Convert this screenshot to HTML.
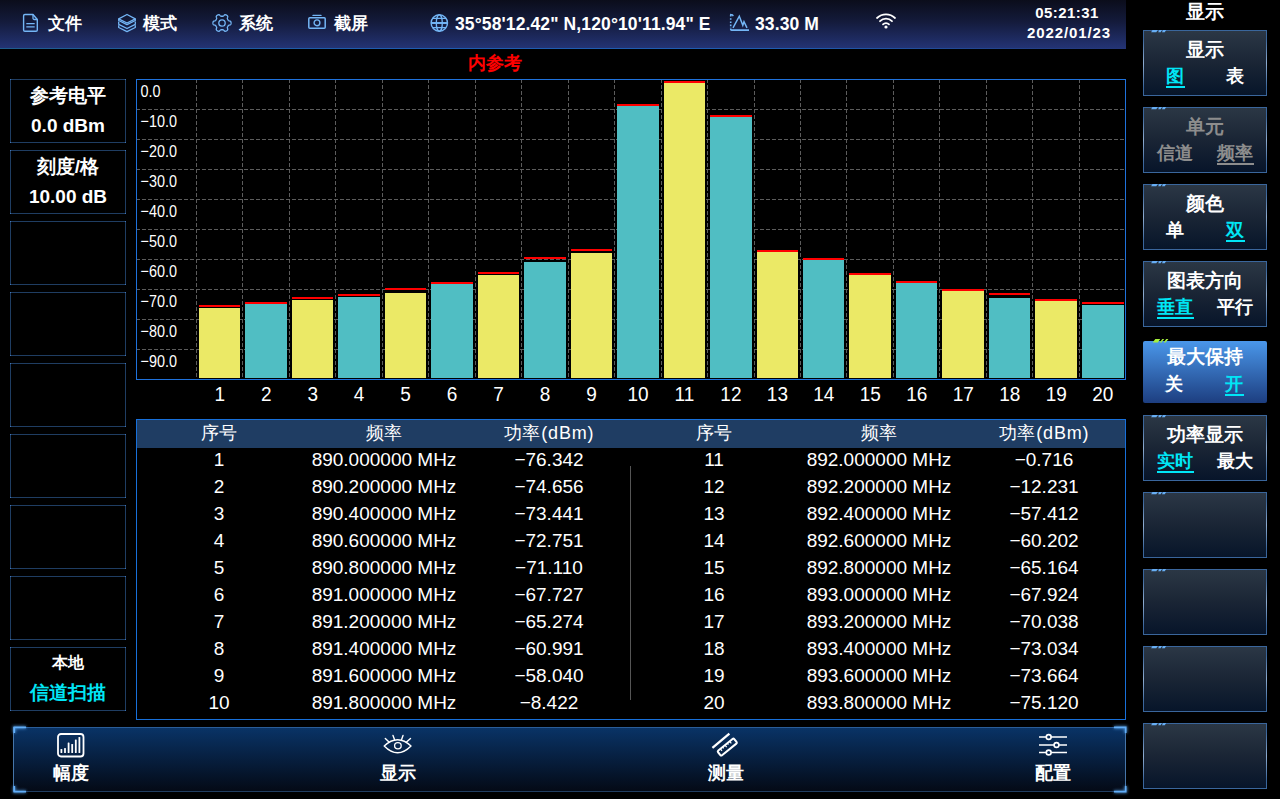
<!DOCTYPE html><html><head><meta charset="utf-8"><style>
*{margin:0;padding:0;box-sizing:border-box}
html,body{width:1280px;height:799px;overflow:hidden;background:#000;font-family:"Liberation Sans",sans-serif;color:#fff}
.a{position:absolute}
.hdr{left:0;top:0;width:1126px;height:49px;background:linear-gradient(#0b0d1b 0%,#141b3c 45%,#243476 100%)}
.hline{left:0;top:48px;width:1126px;height:1px;background:linear-gradient(90deg,#1f5c8c 0%,#1e5cb0 35%,#1e5cb0 70%,rgba(36,52,118,1) 100%)}
.ht{font-size:17.5px;font-weight:bold;line-height:20px;white-space:nowrap;letter-spacing:0.3px}
.lb{left:10px;width:116px;height:64px;border:1px solid #1f3d62}
.lt{width:100%;text-align:center;font-weight:bold;font-size:19px;line-height:20px;position:absolute;left:0}
.rb{left:1143px;width:124px;height:66px;border:1px solid #3a669c;background:linear-gradient(#2b3745,#1a2535 50%,#07152a)}
.rb::before,.rb::after{content:'';position:absolute;top:8px;bottom:8px;width:1px;background:linear-gradient(rgba(120,160,200,0),rgba(170,195,225,.75),rgba(120,160,200,0))}.rb::before{left:-1px}.rb::after{right:-1px}.rb.on::before,.rb.on::after{display:none}
.rb.on{background:linear-gradient(#4a97ea,#1d3e80);border:none;border-radius:2px;margin-top:3px;height:62px}
.rb.on .rt{margin-top:-3px}.rb.on .ro{margin-top:-2px}
.rt{position:absolute;left:0;width:100%;text-align:center;font-size:18.5px;font-weight:bold;line-height:20px}
.ro{position:absolute;font-size:18px;font-weight:bold;line-height:20px;text-align:center;width:40px}
.cy{color:#00e6f6}
.u span{display:inline-block;line-height:20px;position:relative}.u span::after{content:"";position:absolute;left:-0.5px;right:-0.5px;top:20px;height:1.6px;background:currentColor}
.gr{color:#8d8d8d}
.deco{position:absolute;left:8px;top:-1px;width:16px;height:3px}
.tbl{left:136px;top:419px;width:990px;height:301px;border:1px solid #1870da}
.th{position:absolute;left:0;top:0;width:988px;height:28px;background:#1f3d63}
.tc{position:absolute;font-size:19px;line-height:22px;text-align:center;width:200px;white-space:nowrap}
.nav{left:13px;top:727px;width:1113px;height:65px;background:linear-gradient(#093366,#040a16);border:1px solid #2a5d98;border-bottom-color:#213d60;border-left-color:#4676aa;border-right-color:#4676aa}
.nt{position:absolute;font-size:18px;font-weight:bold;line-height:20px;width:80px;text-align:center}
</style></head><body>
<div class="a hdr"></div><div class="a hline"></div>
<svg class="a" style="left:22px;top:13px" width="18" height="21" viewBox="0 0 18 21"><path d="M1.6 2.8a1.3 1.3 0 0 1 1.3-1.3H11L15.3 6.5V17a1.3 1.3 0 0 1-1.3 1.3H2.9A1.3 1.3 0 0 1 1.6 17z" fill="none" stroke="#74b6f6" stroke-width="1.4" stroke-linejoin="round"/><path d="M11 1.5v3.7a1.3 1.3 0 0 0 1.3 1.3h3" fill="none" stroke="#74b6f6" stroke-width="1.3"/><path d="M4.3 10.6h8.4M4.3 13.8h8.4" stroke="#74b6f6" stroke-width="1.3"/></svg>
<div class="a ht" style="left:48px;top:14px;font-size:17px;letter-spacing:0">文件</div>
<svg class="a" style="left:117px;top:13px" width="20" height="20" viewBox="0 0 20 20"><g fill="none" stroke="#74b6f6" stroke-width="1.3" stroke-linejoin="round"><path d="M10 1.5L18.3 5.8 10 10 1.7 5.8z"/><path d="M1.7 5.8V7.5L10 11.7 18.3 7.5V5.8"/><path d="M1.7 8.5V11.3L10 15.5 18.3 11.3V8.5"/><path d="M1.7 12.3V14.5L10 18.6 18.3 14.5V12.3"/></g></svg>
<div class="a ht" style="left:143px;top:14px;font-size:17px;letter-spacing:0">模式</div>
<svg class="a" style="left:212px;top:13px" width="20" height="20" viewBox="0 0 20 20"><path d="M19.05 10.00 L19.04 10.32 L19.01 10.63 L18.96 10.94 L18.87 11.25 L18.71 11.54 L18.41 11.79 L17.92 11.98 L17.34 12.10 L16.85 12.23 L16.54 12.38 L16.34 12.56 L16.20 12.76 L16.08 12.96 L15.96 13.17 L15.85 13.38 L15.73 13.58 L15.61 13.78 L15.49 13.99 L15.39 14.21 L15.33 14.47 L15.35 14.82 L15.49 15.30 L15.67 15.87 L15.75 16.39 L15.68 16.77 L15.52 17.06 L15.30 17.29 L15.05 17.49 L14.79 17.67 L14.53 17.84 L14.25 17.99 L13.96 18.12 L13.67 18.23 L13.36 18.31 L13.02 18.31 L12.66 18.18 L12.25 17.85 L11.85 17.41 L11.50 17.05 L11.21 16.85 L10.95 16.77 L10.71 16.75 L10.47 16.75 L10.24 16.75 L10.00 16.75 L9.76 16.75 L9.53 16.75 L9.29 16.75 L9.05 16.77 L8.79 16.85 L8.50 17.05 L8.15 17.41 L7.75 17.85 L7.34 18.18 L6.98 18.31 L6.64 18.31 L6.33 18.23 L6.04 18.12 L5.75 17.99 L5.48 17.84 L5.21 17.67 L4.95 17.49 L4.70 17.29 L4.48 17.06 L4.32 16.77 L4.25 16.39 L4.33 15.87 L4.51 15.30 L4.65 14.82 L4.67 14.47 L4.61 14.21 L4.51 13.99 L4.39 13.78 L4.27 13.58 L4.15 13.38 L4.04 13.17 L3.92 12.96 L3.80 12.76 L3.66 12.56 L3.46 12.38 L3.15 12.23 L2.66 12.10 L2.08 11.98 L1.59 11.79 L1.29 11.54 L1.13 11.25 L1.04 10.94 L0.99 10.63 L0.96 10.32 L0.95 10.00 L0.96 9.68 L0.99 9.37 L1.04 9.06 L1.13 8.75 L1.29 8.46 L1.59 8.21 L2.08 8.02 L2.66 7.90 L3.15 7.77 L3.46 7.62 L3.66 7.44 L3.80 7.24 L3.92 7.04 L4.04 6.83 L4.15 6.62 L4.27 6.42 L4.39 6.22 L4.51 6.01 L4.61 5.79 L4.67 5.53 L4.65 5.18 L4.51 4.70 L4.33 4.13 L4.25 3.61 L4.32 3.23 L4.48 2.94 L4.70 2.71 L4.95 2.51 L5.21 2.33 L5.47 2.16 L5.75 2.01 L6.04 1.88 L6.33 1.77 L6.64 1.69 L6.98 1.69 L7.34 1.82 L7.75 2.15 L8.15 2.59 L8.50 2.95 L8.79 3.15 L9.05 3.23 L9.29 3.25 L9.53 3.25 L9.76 3.25 L10.00 3.25 L10.24 3.25 L10.47 3.25 L10.71 3.25 L10.95 3.23 L11.21 3.15 L11.50 2.95 L11.85 2.59 L12.25 2.15 L12.66 1.82 L13.02 1.69 L13.36 1.69 L13.67 1.77 L13.96 1.88 L14.25 2.01 L14.53 2.16 L14.79 2.33 L15.05 2.51 L15.30 2.71 L15.52 2.94 L15.68 3.23 L15.75 3.61 L15.67 4.13 L15.49 4.70 L15.35 5.18 L15.33 5.53 L15.39 5.79 L15.49 6.01 L15.61 6.22 L15.73 6.42 L15.85 6.62 L15.96 6.83 L16.08 7.04 L16.20 7.24 L16.34 7.44 L16.54 7.62 L16.85 7.77 L17.34 7.90 L17.92 8.02 L18.41 8.21 L18.71 8.46 L18.87 8.75 L18.96 9.06 L19.01 9.37 L19.04 9.68Z" fill="none" stroke="#74b6f6" stroke-width="1.3" stroke-linejoin="round"/><circle cx="10" cy="10" r="3.2" fill="none" stroke="#74b6f6" stroke-width="1.3"/></svg>
<div class="a ht" style="left:239px;top:14px;font-size:17px;letter-spacing:0">系统</div>
<svg class="a" style="left:307px;top:14px" width="20" height="16" viewBox="0 0 20 16"><path d="M6 1.4h8" stroke="#74b6f6" stroke-width="1.4" stroke-linecap="round"/><rect x="1.8" y="3.7" width="16.4" height="10.5" rx="1" fill="none" stroke="#74b6f6" stroke-width="1.5"/><circle cx="10" cy="8.8" r="2.9" fill="none" stroke="#74b6f6" stroke-width="1.4"/></svg>
<div class="a ht" style="left:334px;top:14px;font-size:17px;letter-spacing:0">截屏</div>
<svg class="a" style="left:429px;top:13px" width="20" height="20" viewBox="0 0 20 20"><circle cx="10.3" cy="10" r="8.2" fill="none" stroke="#74b6f6" stroke-width="1.4"/><ellipse cx="10.3" cy="10" rx="3" ry="8.2" fill="none" stroke="#74b6f6" stroke-width="1.3"/><path d="M3.2 5.3h14.2M2.1 10h16.4M3.2 14.7h14.2" stroke="#74b6f6" stroke-width="1.3"/><path d="M2.1 10h16.4" stroke="#74b6f6" stroke-width="1.8"/></svg>
<div class="a ht" style="left:455px;top:14px;letter-spacing:0.12px">35°58'12.42" N,120°10'11.94" E</div>
<svg class="a" style="left:728px;top:12px" width="22" height="20" viewBox="0 0 22 20"><path d="M2.7 3v13" stroke="#74b6f6" stroke-width="1.6" stroke-dasharray="1.6 1.6"/><path d="M2 2.5l2.5 0.5 0.8 1.2" fill="none" stroke="#74b6f6" stroke-width="1.4"/><path d="M2.7 16.5v0.8a0.8 0.8 0 0 0 0.8 0.8H21" fill="none" stroke="#74b6f6" stroke-width="1.6"/><path d="M5 15.8L11.3 4.2l3.5 9 1.2-3.5 3 6.1" fill="none" stroke="#74b6f6" stroke-width="1.5" stroke-linejoin="miter"/></svg>
<div class="a ht" style="left:755px;top:14px;letter-spacing:0.1px">33.30 M</div>
<svg class="a" style="left:875px;top:11px" width="22" height="18" viewBox="0 0 22 18"><path d="M2 7a13 13 0 0 1 18 0" fill="none" stroke="#fff" stroke-width="1.8" stroke-linecap="round"/><path d="M5 10.2a8.5 8.5 0 0 1 12 0" fill="none" stroke="#fff" stroke-width="1.8" stroke-linecap="round"/><path d="M8 13.3a4.2 4.2 0 0 1 6 0" fill="none" stroke="#fff" stroke-width="1.8" stroke-linecap="round"/><circle cx="11" cy="16" r="1.6" fill="#fff"/></svg>
<div class="a ht" style="left:1024px;top:2.5px;width:86px;text-align:center;font-size:15px;letter-spacing:0.45px">05:21:31</div>
<div class="a ht" style="left:1019px;top:23px;width:100px;text-align:center;font-size:15px;letter-spacing:0.9px">2022/01/23</div>
<div class="a rt" style="left:1143px;width:124px;top:2px">显示</div>
<div class="a rb" style="top:30px"><svg class="a" style="left:-1px;top:-2px" width="30" height="6" viewBox="0 0 30 6"><path d="M8.1 3.2L9.5 1H14.7L13.3 3.2zM15.1 3.2L16.4 1H18.9L17.6 3.2zM18.9 3.2L20.2 1H23.1L21.8 3.2z" fill="#67aef4"/></svg><div class="rt " style="top:8.5px">显示</div><div class="ro cy u" style="left:11px;top:35px"><span>图</span></div><div class="ro " style="left:71px;top:35px"><span>表</span></div></div>
<div class="a rb" style="top:107px"><svg class="a" style="left:-1px;top:-2px" width="30" height="6" viewBox="0 0 30 6"><path d="M8.1 3.2L9.5 1H14.7L13.3 3.2zM15.1 3.2L16.4 1H18.9L17.6 3.2zM18.9 3.2L20.2 1H23.1L21.8 3.2z" fill="#67aef4"/></svg><div class="rt gr" style="top:8.5px">单元</div><div class="ro gr" style="left:11px;top:35px"><span>信道</span></div><div class="ro gr u" style="left:71px;top:35px"><span>频率</span></div></div>
<div class="a rb" style="top:184px"><svg class="a" style="left:-1px;top:-2px" width="30" height="6" viewBox="0 0 30 6"><path d="M8.1 3.2L9.5 1H14.7L13.3 3.2zM15.1 3.2L16.4 1H18.9L17.6 3.2zM18.9 3.2L20.2 1H23.1L21.8 3.2z" fill="#67aef4"/></svg><div class="rt " style="top:8.5px">颜色</div><div class="ro " style="left:11px;top:35px"><span>单</span></div><div class="ro cy u" style="left:71px;top:35px"><span>双</span></div></div>
<div class="a rb" style="top:261px"><svg class="a" style="left:-1px;top:-2px" width="30" height="6" viewBox="0 0 30 6"><path d="M8.1 3.2L9.5 1H14.7L13.3 3.2zM15.1 3.2L16.4 1H18.9L17.6 3.2zM18.9 3.2L20.2 1H23.1L21.8 3.2z" fill="#67aef4"/></svg><div class="rt " style="top:8.5px">图表方向</div><div class="ro cy u" style="left:11px;top:35px"><span>垂直</span></div><div class="ro " style="left:71px;top:35px"><span>平行</span></div></div>
<div class="a rb on" style="top:338px"><svg class="a" style="left:0;top:-2px" width="30" height="6" viewBox="0 0 30 6"><path d="M9.7 3.6L12.3 0.1H17.2L14.9 3.6zM16.8 3.6L19.3 0.1H21.2L18.4 3.6zM20.7 3.6L23.2 0.1H25.4L22.6 3.6z" fill="#a6f03c"/></svg><div class="rt " style="top:8.5px">最大保持</div><div class="ro " style="left:11px;top:35px"><span>关</span></div><div class="ro cy u" style="left:71px;top:35px"><span>开</span></div></div>
<div class="a rb" style="top:415px"><svg class="a" style="left:-1px;top:-2px" width="30" height="6" viewBox="0 0 30 6"><path d="M8.1 3.2L9.5 1H14.7L13.3 3.2zM15.1 3.2L16.4 1H18.9L17.6 3.2zM18.9 3.2L20.2 1H23.1L21.8 3.2z" fill="#67aef4"/></svg><div class="rt " style="top:8.5px">功率显示</div><div class="ro cy u" style="left:11px;top:35px"><span>实时</span></div><div class="ro " style="left:71px;top:35px"><span>最大</span></div></div>
<div class="a rb" style="top:492px"><svg class="a" style="left:-1px;top:-2px" width="30" height="6" viewBox="0 0 30 6"><path d="M8.1 3.2L9.5 1H14.7L13.3 3.2zM15.1 3.2L16.4 1H18.9L17.6 3.2zM18.9 3.2L20.2 1H23.1L21.8 3.2z" fill="#67aef4"/></svg></div>
<div class="a rb" style="top:569px"><svg class="a" style="left:-1px;top:-2px" width="30" height="6" viewBox="0 0 30 6"><path d="M8.1 3.2L9.5 1H14.7L13.3 3.2zM15.1 3.2L16.4 1H18.9L17.6 3.2zM18.9 3.2L20.2 1H23.1L21.8 3.2z" fill="#67aef4"/></svg></div>
<div class="a rb" style="top:646px"><svg class="a" style="left:-1px;top:-2px" width="30" height="6" viewBox="0 0 30 6"><path d="M8.1 3.2L9.5 1H14.7L13.3 3.2zM15.1 3.2L16.4 1H18.9L17.6 3.2zM18.9 3.2L20.2 1H23.1L21.8 3.2z" fill="#67aef4"/></svg></div>
<div class="a rb" style="top:723px"><svg class="a" style="left:-1px;top:-2px" width="30" height="6" viewBox="0 0 30 6"><path d="M8.1 3.2L9.5 1H14.7L13.3 3.2zM15.1 3.2L16.4 1H18.9L17.6 3.2zM18.9 3.2L20.2 1H23.1L21.8 3.2z" fill="#67aef4"/></svg></div>
<div class="a lb" style="top:79px"><div class="lt" style="top:6px">参考电平</div><div class="lt" style="top:36px;font-size:19px">0.0 dBm</div></div>
<div class="a lb" style="top:150px"><div class="lt" style="top:6px">刻度/格</div><div class="lt" style="top:36px;font-size:19px">10.00 dB</div></div>
<div class="a lb" style="top:221px"></div>
<div class="a lb" style="top:292px"></div>
<div class="a lb" style="top:363px"></div>
<div class="a lb" style="top:434px"></div>
<div class="a lb" style="top:505px"></div>
<div class="a lb" style="top:576px"></div>
<div class="a lb" style="top:647px"><div class="lt" style="top:4.5px;font-size:15.5px;font-weight:bold">本地</div><div class="lt cy" style="top:35px">信道扫描</div></div>
<svg class="a" style="left:0;top:0" width="130" height="720" viewBox="0 0 130 720"><g fill="#3f73b4"><rect x="10" y="79" width="1" height="1"/><rect x="125" y="79" width="1" height="1"/><rect x="10" y="142" width="1" height="1"/><rect x="125" y="142" width="1" height="1"/><rect x="10" y="150" width="1" height="1"/><rect x="125" y="150" width="1" height="1"/><rect x="10" y="213" width="1" height="1"/><rect x="125" y="213" width="1" height="1"/><rect x="10" y="221" width="1" height="1"/><rect x="125" y="221" width="1" height="1"/><rect x="10" y="284" width="1" height="1"/><rect x="125" y="284" width="1" height="1"/><rect x="10" y="292" width="1" height="1"/><rect x="125" y="292" width="1" height="1"/><rect x="10" y="355" width="1" height="1"/><rect x="125" y="355" width="1" height="1"/><rect x="10" y="363" width="1" height="1"/><rect x="125" y="363" width="1" height="1"/><rect x="10" y="426" width="1" height="1"/><rect x="125" y="426" width="1" height="1"/><rect x="10" y="434" width="1" height="1"/><rect x="125" y="434" width="1" height="1"/><rect x="10" y="497" width="1" height="1"/><rect x="125" y="497" width="1" height="1"/><rect x="10" y="505" width="1" height="1"/><rect x="125" y="505" width="1" height="1"/><rect x="10" y="568" width="1" height="1"/><rect x="125" y="568" width="1" height="1"/><rect x="10" y="576" width="1" height="1"/><rect x="125" y="576" width="1" height="1"/><rect x="10" y="639" width="1" height="1"/><rect x="125" y="639" width="1" height="1"/><rect x="10" y="647" width="1" height="1"/><rect x="125" y="647" width="1" height="1"/><rect x="10" y="710" width="1" height="1"/><rect x="125" y="710" width="1" height="1"/></g></svg>
<div class="a" style="left:468px;top:52px;font-size:18px;font-weight:bold;color:#ff0000;line-height:22px">内参考</div>
<svg class="a" style="left:0;top:0" width="1280" height="420" viewBox="0 0 1280 420"><line x1="136" y1="109.5" x2="1125" y2="109.5" stroke="#5c5c5c" stroke-width="1" stroke-dasharray="4 2"/><line x1="136" y1="139.5" x2="1125" y2="139.5" stroke="#5c5c5c" stroke-width="1" stroke-dasharray="4 2"/><line x1="136" y1="169.5" x2="1125" y2="169.5" stroke="#5c5c5c" stroke-width="1" stroke-dasharray="4 2"/><line x1="136" y1="199.5" x2="1125" y2="199.5" stroke="#5c5c5c" stroke-width="1" stroke-dasharray="4 2"/><line x1="136" y1="229.5" x2="1125" y2="229.5" stroke="#5c5c5c" stroke-width="1" stroke-dasharray="4 2"/><line x1="136" y1="259.5" x2="1125" y2="259.5" stroke="#5c5c5c" stroke-width="1" stroke-dasharray="4 2"/><line x1="136" y1="289.5" x2="1125" y2="289.5" stroke="#5c5c5c" stroke-width="1" stroke-dasharray="4 2"/><line x1="136" y1="319.5" x2="1125" y2="319.5" stroke="#5c5c5c" stroke-width="1" stroke-dasharray="4 2"/><line x1="136" y1="349.5" x2="1125" y2="349.5" stroke="#5c5c5c" stroke-width="1" stroke-dasharray="4 2"/><line x1="196.5" y1="79" x2="196.5" y2="379" stroke="#5c5c5c" stroke-width="1" stroke-dasharray="4 2"/><line x1="242.5" y1="79" x2="242.5" y2="379" stroke="#5c5c5c" stroke-width="1" stroke-dasharray="4 2"/><line x1="289.5" y1="79" x2="289.5" y2="379" stroke="#5c5c5c" stroke-width="1" stroke-dasharray="4 2"/><line x1="335.5" y1="79" x2="335.5" y2="379" stroke="#5c5c5c" stroke-width="1" stroke-dasharray="4 2"/><line x1="382.5" y1="79" x2="382.5" y2="379" stroke="#5c5c5c" stroke-width="1" stroke-dasharray="4 2"/><line x1="428.5" y1="79" x2="428.5" y2="379" stroke="#5c5c5c" stroke-width="1" stroke-dasharray="4 2"/><line x1="475.5" y1="79" x2="475.5" y2="379" stroke="#5c5c5c" stroke-width="1" stroke-dasharray="4 2"/><line x1="521.5" y1="79" x2="521.5" y2="379" stroke="#5c5c5c" stroke-width="1" stroke-dasharray="4 2"/><line x1="568.5" y1="79" x2="568.5" y2="379" stroke="#5c5c5c" stroke-width="1" stroke-dasharray="4 2"/><line x1="614.5" y1="79" x2="614.5" y2="379" stroke="#5c5c5c" stroke-width="1" stroke-dasharray="4 2"/><line x1="661.5" y1="79" x2="661.5" y2="379" stroke="#5c5c5c" stroke-width="1" stroke-dasharray="4 2"/><line x1="707.5" y1="79" x2="707.5" y2="379" stroke="#5c5c5c" stroke-width="1" stroke-dasharray="4 2"/><line x1="754.5" y1="79" x2="754.5" y2="379" stroke="#5c5c5c" stroke-width="1" stroke-dasharray="4 2"/><line x1="800.5" y1="79" x2="800.5" y2="379" stroke="#5c5c5c" stroke-width="1" stroke-dasharray="4 2"/><line x1="846.5" y1="79" x2="846.5" y2="379" stroke="#5c5c5c" stroke-width="1" stroke-dasharray="4 2"/><line x1="893.5" y1="79" x2="893.5" y2="379" stroke="#5c5c5c" stroke-width="1" stroke-dasharray="4 2"/><line x1="939.5" y1="79" x2="939.5" y2="379" stroke="#5c5c5c" stroke-width="1" stroke-dasharray="4 2"/><line x1="986.5" y1="79" x2="986.5" y2="379" stroke="#5c5c5c" stroke-width="1" stroke-dasharray="4 2"/><line x1="1032.5" y1="79" x2="1032.5" y2="379" stroke="#5c5c5c" stroke-width="1" stroke-dasharray="4 2"/><line x1="1079.5" y1="79" x2="1079.5" y2="379" stroke="#5c5c5c" stroke-width="1" stroke-dasharray="4 2"/><rect x="199" y="308" width="41" height="70" fill="#ebe966"/><rect x="199" y="305" width="41" height="2" fill="#ff0000"/><rect x="245" y="304" width="42" height="74" fill="#50bec3"/><rect x="245" y="302" width="42" height="2" fill="#ff0000"/><rect x="292" y="300" width="41" height="78" fill="#ebe966"/><rect x="292" y="297" width="41" height="2" fill="#ff0000"/><rect x="338" y="297" width="42" height="81" fill="#50bec3"/><rect x="338" y="294" width="42" height="2" fill="#ff0000"/><rect x="385" y="293" width="41" height="85" fill="#ebe966"/><rect x="385" y="288" width="41" height="2" fill="#ff0000"/><rect x="431" y="284" width="42" height="94" fill="#50bec3"/><rect x="431" y="282" width="42" height="2" fill="#ff0000"/><rect x="478" y="275" width="41" height="103" fill="#ebe966"/><rect x="478" y="272" width="41" height="2" fill="#ff0000"/><rect x="524" y="262" width="42" height="116" fill="#50bec3"/><rect x="524" y="257" width="42" height="2" fill="#ff0000"/><rect x="571" y="253" width="41" height="125" fill="#ebe966"/><rect x="571" y="249" width="41" height="2" fill="#ff0000"/><rect x="617" y="106" width="42" height="272" fill="#50bec3"/><rect x="617" y="104" width="42" height="2" fill="#ff0000"/><rect x="664" y="83" width="41" height="295" fill="#ebe966"/><rect x="664" y="81" width="41" height="2" fill="#ff0000"/><rect x="710" y="117" width="42" height="261" fill="#50bec3"/><rect x="710" y="115" width="42" height="2" fill="#ff0000"/><rect x="757" y="252" width="41" height="126" fill="#ebe966"/><rect x="757" y="250" width="41" height="2" fill="#ff0000"/><rect x="803" y="260" width="41" height="118" fill="#50bec3"/><rect x="803" y="258" width="41" height="2" fill="#ff0000"/><rect x="849" y="275" width="42" height="103" fill="#ebe966"/><rect x="849" y="273" width="42" height="2" fill="#ff0000"/><rect x="896" y="283" width="41" height="95" fill="#50bec3"/><rect x="896" y="281" width="41" height="2" fill="#ff0000"/><rect x="942" y="291" width="42" height="87" fill="#ebe966"/><rect x="942" y="289" width="42" height="2" fill="#ff0000"/><rect x="989" y="298" width="41" height="80" fill="#50bec3"/><rect x="989" y="293" width="41" height="2" fill="#ff0000"/><rect x="1035" y="301" width="42" height="77" fill="#ebe966"/><rect x="1035" y="299" width="42" height="2" fill="#ff0000"/><rect x="1082" y="305" width="42" height="73" fill="#50bec3"/><rect x="1082" y="302" width="42" height="2" fill="#ff0000"/><rect x="136.5" y="79.5" width="989" height="300" fill="none" stroke="#1f72dc" stroke-width="1"/><text transform="translate(140.5 97) scale(0.93 1.08)" font-size="15.5" fill="#fff" font-family="Liberation Sans">0.0</text><text transform="translate(140.5 127) scale(0.93 1.08)" font-size="15.5" fill="#fff" font-family="Liberation Sans">−10.0</text><text transform="translate(140.5 157) scale(0.93 1.08)" font-size="15.5" fill="#fff" font-family="Liberation Sans">−20.0</text><text transform="translate(140.5 187) scale(0.93 1.08)" font-size="15.5" fill="#fff" font-family="Liberation Sans">−30.0</text><text transform="translate(140.5 217) scale(0.93 1.08)" font-size="15.5" fill="#fff" font-family="Liberation Sans">−40.0</text><text transform="translate(140.5 247) scale(0.93 1.08)" font-size="15.5" fill="#fff" font-family="Liberation Sans">−50.0</text><text transform="translate(140.5 277) scale(0.93 1.08)" font-size="15.5" fill="#fff" font-family="Liberation Sans">−60.0</text><text transform="translate(140.5 307) scale(0.93 1.08)" font-size="15.5" fill="#fff" font-family="Liberation Sans">−70.0</text><text transform="translate(140.5 337) scale(0.93 1.08)" font-size="15.5" fill="#fff" font-family="Liberation Sans">−80.0</text><text transform="translate(140.5 367) scale(0.93 1.08)" font-size="15.5" fill="#fff" font-family="Liberation Sans">−90.0</text><text transform="translate(219.7 401) scale(1 1.05)" font-size="19" fill="#fff" text-anchor="middle" font-family="Liberation Sans">1</text><text transform="translate(266.2 401) scale(1 1.05)" font-size="19" fill="#fff" text-anchor="middle" font-family="Liberation Sans">2</text><text transform="translate(312.7 401) scale(1 1.05)" font-size="19" fill="#fff" text-anchor="middle" font-family="Liberation Sans">3</text><text transform="translate(359.1 401) scale(1 1.05)" font-size="19" fill="#fff" text-anchor="middle" font-family="Liberation Sans">4</text><text transform="translate(405.6 401) scale(1 1.05)" font-size="19" fill="#fff" text-anchor="middle" font-family="Liberation Sans">5</text><text transform="translate(452.1 401) scale(1 1.05)" font-size="19" fill="#fff" text-anchor="middle" font-family="Liberation Sans">6</text><text transform="translate(498.6 401) scale(1 1.05)" font-size="19" fill="#fff" text-anchor="middle" font-family="Liberation Sans">7</text><text transform="translate(545.0 401) scale(1 1.05)" font-size="19" fill="#fff" text-anchor="middle" font-family="Liberation Sans">8</text><text transform="translate(591.5 401) scale(1 1.05)" font-size="19" fill="#fff" text-anchor="middle" font-family="Liberation Sans">9</text><text transform="translate(638.0 401) scale(1 1.05)" font-size="19" fill="#fff" text-anchor="middle" font-family="Liberation Sans">10</text><text transform="translate(684.4 401) scale(1 1.05)" font-size="19" fill="#fff" text-anchor="middle" font-family="Liberation Sans">11</text><text transform="translate(730.9 401) scale(1 1.05)" font-size="19" fill="#fff" text-anchor="middle" font-family="Liberation Sans">12</text><text transform="translate(777.4 401) scale(1 1.05)" font-size="19" fill="#fff" text-anchor="middle" font-family="Liberation Sans">13</text><text transform="translate(823.8 401) scale(1 1.05)" font-size="19" fill="#fff" text-anchor="middle" font-family="Liberation Sans">14</text><text transform="translate(870.3 401) scale(1 1.05)" font-size="19" fill="#fff" text-anchor="middle" font-family="Liberation Sans">15</text><text transform="translate(916.8 401) scale(1 1.05)" font-size="19" fill="#fff" text-anchor="middle" font-family="Liberation Sans">16</text><text transform="translate(963.3 401) scale(1 1.05)" font-size="19" fill="#fff" text-anchor="middle" font-family="Liberation Sans">17</text><text transform="translate(1009.7 401) scale(1 1.05)" font-size="19" fill="#fff" text-anchor="middle" font-family="Liberation Sans">18</text><text transform="translate(1056.2 401) scale(1 1.05)" font-size="19" fill="#fff" text-anchor="middle" font-family="Liberation Sans">19</text><text transform="translate(1102.7 401) scale(1 1.05)" font-size="19" fill="#fff" text-anchor="middle" font-family="Liberation Sans">20</text></svg>
<div class="a tbl"><div class="th"></div><div class="tc" style="left:-18px;top:2px;font-size:18px;">序号</div><div class="tc" style="left:147px;top:2px;font-size:18px;">频率</div><div class="tc" style="left:312px;top:2px;font-size:18px;letter-spacing:0.8px;">功率(dBm)</div><div class="tc" style="left:477px;top:2px;font-size:18px;">序号</div><div class="tc" style="left:642px;top:2px;font-size:18px;">频率</div><div class="tc" style="left:807px;top:2px;font-size:18px;letter-spacing:0.8px;">功率(dBm)</div><div class="tc" style="left:-18px;top:29px">1</div><div class="tc" style="left:147px;top:29px">890.000000 MHz</div><div class="tc" style="left:312px;top:29px">−76.342</div><div class="tc" style="left:477px;top:29px">11</div><div class="tc" style="left:642px;top:29px">892.000000 MHz</div><div class="tc" style="left:807px;top:29px">−0.716</div><div class="tc" style="left:-18px;top:56px">2</div><div class="tc" style="left:147px;top:56px">890.200000 MHz</div><div class="tc" style="left:312px;top:56px">−74.656</div><div class="tc" style="left:477px;top:56px">12</div><div class="tc" style="left:642px;top:56px">892.200000 MHz</div><div class="tc" style="left:807px;top:56px">−12.231</div><div class="tc" style="left:-18px;top:83px">3</div><div class="tc" style="left:147px;top:83px">890.400000 MHz</div><div class="tc" style="left:312px;top:83px">−73.441</div><div class="tc" style="left:477px;top:83px">13</div><div class="tc" style="left:642px;top:83px">892.400000 MHz</div><div class="tc" style="left:807px;top:83px">−57.412</div><div class="tc" style="left:-18px;top:110px">4</div><div class="tc" style="left:147px;top:110px">890.600000 MHz</div><div class="tc" style="left:312px;top:110px">−72.751</div><div class="tc" style="left:477px;top:110px">14</div><div class="tc" style="left:642px;top:110px">892.600000 MHz</div><div class="tc" style="left:807px;top:110px">−60.202</div><div class="tc" style="left:-18px;top:137px">5</div><div class="tc" style="left:147px;top:137px">890.800000 MHz</div><div class="tc" style="left:312px;top:137px">−71.110</div><div class="tc" style="left:477px;top:137px">15</div><div class="tc" style="left:642px;top:137px">892.800000 MHz</div><div class="tc" style="left:807px;top:137px">−65.164</div><div class="tc" style="left:-18px;top:164px">6</div><div class="tc" style="left:147px;top:164px">891.000000 MHz</div><div class="tc" style="left:312px;top:164px">−67.727</div><div class="tc" style="left:477px;top:164px">16</div><div class="tc" style="left:642px;top:164px">893.000000 MHz</div><div class="tc" style="left:807px;top:164px">−67.924</div><div class="tc" style="left:-18px;top:191px">7</div><div class="tc" style="left:147px;top:191px">891.200000 MHz</div><div class="tc" style="left:312px;top:191px">−65.274</div><div class="tc" style="left:477px;top:191px">17</div><div class="tc" style="left:642px;top:191px">893.200000 MHz</div><div class="tc" style="left:807px;top:191px">−70.038</div><div class="tc" style="left:-18px;top:218px">8</div><div class="tc" style="left:147px;top:218px">891.400000 MHz</div><div class="tc" style="left:312px;top:218px">−60.991</div><div class="tc" style="left:477px;top:218px">18</div><div class="tc" style="left:642px;top:218px">893.400000 MHz</div><div class="tc" style="left:807px;top:218px">−73.034</div><div class="tc" style="left:-18px;top:245px">9</div><div class="tc" style="left:147px;top:245px">891.600000 MHz</div><div class="tc" style="left:312px;top:245px">−58.040</div><div class="tc" style="left:477px;top:245px">19</div><div class="tc" style="left:642px;top:245px">893.600000 MHz</div><div class="tc" style="left:807px;top:245px">−73.664</div><div class="tc" style="left:-18px;top:272px">10</div><div class="tc" style="left:147px;top:272px">891.800000 MHz</div><div class="tc" style="left:312px;top:272px">−8.422</div><div class="tc" style="left:477px;top:272px">20</div><div class="tc" style="left:642px;top:272px">893.800000 MHz</div><div class="tc" style="left:807px;top:272px">−75.120</div><div class="a" style="left:493px;top:46px;width:1px;height:234px;background:#555"></div></div>
<div class="a nav"></div><svg class="a" style="left:10px;top:723px" width="1120" height="73" viewBox="0 0 1120 73"><defs><filter id="gl" x="-50%" y="-50%" width="200%" height="200%"><feGaussianBlur stdDeviation="1.8"/></filter></defs><g stroke="#5aa8f5" stroke-width="3" fill="none" filter="url(#gl)" opacity="0.7"><path d="M16 4.3H4.3V10"/><path d="M16 68.7H4.3V63"/><path d="M1104 4.3H1115.7V10"/><path d="M1104 68.7H1115.7V63"/></g><g stroke="#62aef8" stroke-width="1.7" fill="none"><path d="M16 4.3H4.3V10"/><path d="M16 68.7H4.3V63"/><path d="M1104 4.3H1115.7V10"/><path d="M1104 68.7H1115.7V63"/></g></svg><div class="a nt" style="left:31px;top:763px">幅度</div><div class="a nt" style="left:358px;top:763px">显示</div><div class="a nt" style="left:686px;top:763px">测量</div><div class="a nt" style="left:1013px;top:763px">配置</div><svg class="a" style="left:57px;top:733px" width="28" height="25" viewBox="0 0 28 25"><rect x="1" y="1" width="25.5" height="22.5" rx="3" fill="none" stroke="#fff" stroke-width="1.8"/><g fill="#fff"><rect x="3.5" y="16" width="1.8" height="4.0" rx="0.6"/><rect x="7.1" y="15" width="1.8" height="5.0" rx="0.6"/><rect x="10.7" y="9.4" width="1.8" height="10.6" rx="0.6"/><rect x="14.3" y="11" width="1.8" height="9.0" rx="0.6"/><rect x="17.9" y="6.4" width="1.8" height="13.6" rx="0.6"/><rect x="21.5" y="4" width="1.8" height="16.0" rx="0.6"/></g></svg><svg class="a" style="left:383px;top:734px" width="30" height="21" viewBox="0 0 30 21"><path d="M1.2 12Q14.6 -0.5 28 12Q14.6 25.6 1.2 12z" fill="none" stroke="#fff" stroke-width="1.4" stroke-linejoin="round"/><ellipse cx="14.9" cy="11.8" rx="3.3" ry="3.1" fill="none" stroke="#fff" stroke-width="1.3"/><path d="M2.3 4.4L6 8M10 1.5L11.5 5.5M20 1.5L18.5 5.8M27.5 4.4L23.5 8" stroke="#fff" stroke-width="1.4" stroke-linecap="round"/></svg><svg class="a" style="left:708px;top:728px" width="36" height="32" viewBox="0 0 36 32"><path d="M4.4 19.8L21.4 5.6" stroke="#fff" stroke-width="2.3"/><g transform="translate(19.3 19.1) rotate(-39)"><rect x="-10.4" y="-3" width="20.8" height="6" rx="1.2" fill="none" stroke="#fff" stroke-width="2"/><path d="M-6.5 -3v2.6M-3.5 -3v1.7M-0.5 -3v2.6M2.5 -3v1.7M5.5 -3v2.6" stroke="#fff" stroke-width="1.2"/></g></svg><svg class="a" style="left:1038px;top:733px" width="30" height="24" viewBox="0 0 30 24"><g stroke="#fff" stroke-width="1.6" fill="none"><path d="M1 4h7.5M13 4h16"/><circle cx="10.7" cy="4" r="2.4" fill="#0a2a55"/><path d="M1 12h15M21 12h8"/><circle cx="18.5" cy="12" r="2.4" fill="#0a2a55"/><path d="M1 19.5h7.5M13 19.5h16"/><circle cx="10.7" cy="19.5" r="2.4" fill="#0a2a55"/></g></svg>
</body></html>
